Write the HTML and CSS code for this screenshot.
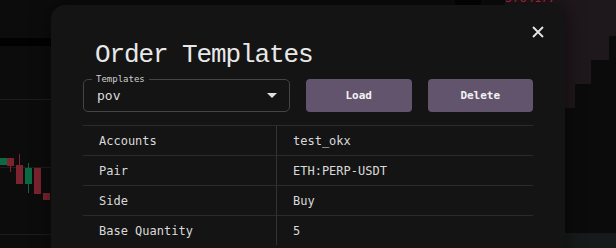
FILE: index.html
```html
<!DOCTYPE html>
<html>
<head>
    <title>Order Templates</title>
    <link rel="stylesheet" href="styles.css">
</head>
<body>
    <div class="screen">
        <div class="chart">
            <div class="band"></div>
            <div class="grid-line line-1"></div>
            <div class="grid-line line-2"></div>
            <div class="grid-line line-3"></div>
            <div class="top-block"></div>
            <div class="candle up" style="left:0;top:158px;height:7px"></div>
            <div class="candle down" style="left:7px;top:158px;height:8px"><span class="wick" style="top:0;height:14px"></span></div>
            <div class="candle down" style="left:16px;top:165px;height:19px"><span class="wick" style="top:-11px;height:12px"></span></div>
            <div class="candle up" style="left:25px;top:168px;height:16px"><span class="wick" style="top:-5px;height:30px"></span></div>
            <div class="candle down" style="left:34px;top:168px;height:26px"></div>
            <div class="candle down" style="left:43px;top:193px;height:7px"></div>
        </div>
        <div class="book">
            <div class="book-price">5764177</div>
            <div class="depth">
                <div class="depth-bar" style="height:125px"></div>
                <div class="depth-bar" style="width:16px;height:149px"></div>
                <div class="depth-bar" style="width:18px;height:173px"></div>
                <div class="depth-bar" style="width:7px;height:197px"></div>
            </div>
            <div class="book-foot"></div>
        </div>

        <div class="dialog">
            <button class="close" aria-label="close">
                <svg width="12" height="12" viewBox="0 0 12 12"><path d="M1 1L11 11M11 1L1 11" stroke="#e6e6e6" stroke-width="1.8" fill="none"/></svg>
            </button>
            <h2 class="title">Order Templates</h2>
            <div class="toolbar">
                <fieldset class="select">
                    <legend>Templates</legend>
                    <span class="select-value">pov</span>
                    <span class="arrow"></span>
                </fieldset>
                <button class="btn">Load</button>
                <button class="btn">Delete</button>
            </div>
            <div class="table">
                <div class="cell">Accounts</div><div class="cell value">test_okx</div>
                <div class="cell">Pair</div><div class="cell value">ETH:PERP-USDT</div>
                <div class="cell">Side</div><div class="cell value">Buy</div>
                <div class="cell">Base Quantity</div><div class="cell value">5</div>
            </div>
        </div>
    </div>
</body>
</html>
```

FILE: styles.css
```css
body {
    margin: 0;
    background: #0c0c0c;
    font-family: "DejaVu Sans Mono", monospace;
    color: #dcdcdc;
    overflow: hidden;
}
.screen {
    position: relative;
    width: 616px;
    height: 248px;
    display: grid;
    grid-template-columns: 505px 1fr;
    overflow: hidden;
}
.chart {
    position: relative;
    background: #0c0c0c;
}
.band {
    position: absolute;
    left: 0;
    right: 0;
    top: 38px;
    height: 8px;
    background: #020202;
}
.grid-line {
    position: absolute;
    left: 0;
    right: 0;
    height: 1px;
    background: #1d1d1d;
}
.line-1 { top: 99px; }
.line-2 { top: 167px; }
.line-3 { top: 234px; }
.top-block {
    position: absolute;
    left: 455px;
    top: 0;
    width: 26px;
    height: 6px;
    background: #040404;
}
.candle {
    position: absolute;
    width: 7px;
}
.candle.up { background: #0b6a43; }
.candle.down { background: #7b2430; }
.wick {
    position: absolute;
    left: 3px;
    width: 1px;
    background: inherit;
}
.book {
    display: flex;
    flex-direction: column;
    background: #1e171b;
}
.book-price {
    margin-top: -9px;
    height: 14px;
    font-size: 12px;
    color: #b3303c;
}
.depth {
    flex: 1;
    display: flex;
    justify-content: flex-end;
    align-items: flex-end;
}
.depth-bar {
    width: 70px;
    background: #0b0b0b;
}
.book-foot {
    height: 15px;
    background: #171a1a;
}

.dialog {
    position: absolute;
    left: 51px;
    top: 5px;
    width: 514px;
    height: 270px;
    box-sizing: border-box;
    padding: 0 32px;
    background: #141414;
    border-radius: 14px;
    box-shadow: 0 0 20px rgba(0, 0, 0, 0.5);
}
.close {
    position: absolute;
    top: 21px;
    right: 21px;
    padding: 0;
    border: 0;
    background: none;
    width: 12px;
    height: 12px;
    display: flex;
}
.title {
    margin: 34px 0 0 12px;
    font-family: "Liberation Mono", monospace;
    font-weight: normal;
    font-size: 26px;
    letter-spacing: -1.1px;
    line-height: 32px;
    color: #e8e8e8;
}
.toolbar {
    display: grid;
    grid-template-columns: 207px 1fr 1fr;
    gap: 16px;
    margin-top: 3px;
    align-items: end;
}
.select {
    margin: 0;
    padding: 0 12px 0 13px;
    height: 38px;
    box-sizing: border-box;
    border: 1px solid #444;
    border-radius: 5px;
    display: flex;
    align-items: center;
    justify-content: space-between;
}
.select legend {
    font-size: 9px;
    color: #d0d0d0;
    padding: 0 4px;
    margin-left: -5px;
    line-height: 10px;
}
.select-value {
    font-size: 13px;
    margin-top: -4px;
}
.arrow {
    width: 0;
    height: 0;
    border-left: 5px solid transparent;
    border-right: 5px solid transparent;
    border-top: 5px solid #e0e0e0;
    margin-top: -4px;
}
.btn {
    height: 33px;
    border: 0;
    border-radius: 4px;
    background: #62546d;
    color: #f2f2f2;
    font-family: "DejaVu Sans Mono", monospace;
    font-weight: bold;
    font-size: 11px;
    cursor: pointer;
}
.table {
    display: grid;
    grid-template-columns: 193px 1fr;
    margin-top: 13px;
}
.cell {
    height: 30px;
    box-sizing: border-box;
    border-top: 1px solid #2b2b2b;
    padding-left: 16px;
    display: flex;
    align-items: center;
    font-size: 12px;
    color: #dadada;
}
.cell.value {
    border-left: 1px solid #333;
}
```
